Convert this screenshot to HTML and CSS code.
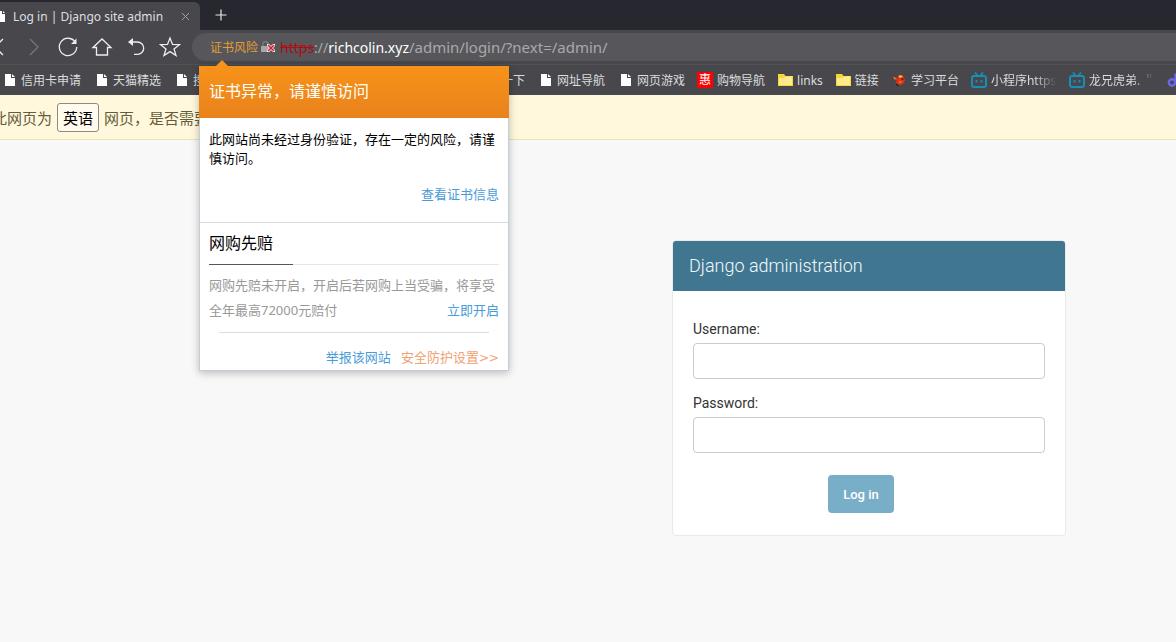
FILE: index.html
```html
<!DOCTYPE html>
<html lang="zh-CN">
<head>
<meta charset="utf-8">
<title>Log in | Django site admin</title>
<link rel="stylesheet" href="styles.css">
</head>
<body>
<svg class="defs" aria-hidden="true">
  <symbol id="file" viewBox="0 0 16 16"><path d="M4 2h6v4h4v8H4z" fill="#fff"/><path d="M11 2l3 3h-3z" fill="#fff"/></symbol>
  <symbol id="folder" viewBox="0 0 16 16"><path d="M1 2h6l1.500 2H16v10H1z" fill="#f7d63c"/><path d="M2 6h5l2-1.500h6V13H2z" fill="#ffeb8c"/></symbol>
  <symbol id="tv" viewBox="0 0 16 16"><path d="M4 0.500l2.500 3M12 0.500l-2.500 3" stroke="#168fb8" stroke-width="1.800" fill="none"/><rect x="1" y="4" width="14" height="11" rx="2" fill="none" stroke="#168fb8" stroke-width="2"/><path d="M5.500 8v2.500M10.500 8v2.500" stroke="#168fb8" stroke-width="1.800"/></symbol>
</svg>

<header class="browser">
  <div class="tabs">
    <div class="tab">
      <svg class="tab-icon" viewBox="0 0 8 16"><path d="M0 3h2v3h3v8H0zM3 3l2 2H3z" fill="#fff"/></svg>
      <span class="tab-title">Log in | Django site admin</span>
      <button class="tab-close" aria-label="关闭标签页"><svg width="9" height="9" viewBox="0 0 9 9"><path d="M1 1l7 7M8 1L1 8" stroke="#a0a0a4"/></svg></button>
    </div>
    <button class="tab-new" aria-label="新标签页"><svg width="12" height="12" viewBox="0 0 12 12"><path d="M6 0.500v11M0.500 6h11" stroke="#e8e8ea" stroke-width="1.200"/></svg></button>
  </div>

  <div class="toolbar">
    <nav class="tools">
      <button class="tool" aria-label="后退"><svg viewBox="0 0 22 22"><path d="M14 3L6 11l8 8"/></svg></button>
      <button class="tool tool-off" aria-label="前进"><svg viewBox="0 0 22 22"><path d="M7 3l8 8-8 8"/></svg></button>
      <button class="tool" aria-label="刷新"><svg viewBox="0 0 22 22"><path d="M18.500 6.500A8.700 8.700 0 1 0 19.700 11"/><path d="M19.500 2.500v5.500H14z" fill="#ededee" stroke="none"/></svg></button>
      <button class="tool" aria-label="主页"><svg viewBox="0 0 22 22"><path d="M2 11.500L11 3l9 8.500h-3.500V19h-11v-7.500z"/></svg></button>
      <button class="tool" aria-label="撤销"><svg viewBox="0 0 22 22"><path d="M4 6h8.500a6.200 6.200 0 0 1 0 12.400H9"/><path d="M8 2v8L3 6z" fill="#ededee" stroke="none"/></svg></button>
      <button class="tool" aria-label="收藏"><svg viewBox="0 0 22 22"><path d="M11 2l2.500 6.400 7 .3-5.500 4.200 2 6.600-6-3.900-6 3.900 2-6.600L1.500 8.700l7-.3z"/></svg></button>
    </nav>
    <div class="address">
      <span class="risk">证书风险</span>
      <svg class="lock" viewBox="0 0 16 14"><path d="M3 6V4a2.500 2.500 0 0 1 5 0v2" fill="none" stroke="#77777b" stroke-width="1.500"/><rect x="1" y="6" width="9" height="6" fill="#a7a7ab"/><path d="M7 4h2l2 2 2-2h2v2l-2 2 2 2v2h-2l-2-2-2 2H7v-2l2-2-2-2z" fill="#fff"/><path d="M8 5l6 6M14 5l-6 6" stroke="#d51f28" stroke-width="1.700"/></svg>
      <span class="url"><s class="scheme">https</s>://<b class="host">richcolin.xyz</b><span class="path">/admin/login/?next=/admin/</span></span>

      <section class="popup">
        <h2 class="popup-title">证书异常，请谨慎访问</h2>
        <div class="notice">
          <p class="notice-text">此网站尚未经过身份验证，存在一定的风险，请谨慎访问。</p>
          <a class="link notice-link" href="#">查看证书信息</a>
        </div>
        <div class="cover">
          <h3 class="cover-title"><span>网购先赔</span></h3>
          <div class="cover-text">
            <p>网购先赔未开启，开启后若网购上当受骗，将享受</p>
            <div class="cover-row"><span>全年最高72000元赔付</span><a class="link" href="#">立即开启</a></div>
          </div>
          <div class="popup-foot"><a class="link" href="#">举报该网站</a><a class="link link-warm" href="#">安全防护设置<span class="arrows">&gt;&gt;</span></a></div>
        </div>
      </section>
    </div>
  </div>

  <nav class="bookmarks">
    <a class="mark" href="#"><svg><use href="#file"/></svg><span>信用卡申请</span></a>
    <a class="mark" href="#"><svg><use href="#file"/></svg><span>天猫精选</span></a>
    <a class="mark mark-wide" href="#"><svg><use href="#file"/></svg><span>搜</span></a>
    <a class="mark" href="#"><span>一下</span></a>
    <a class="mark" href="#"><svg><use href="#file"/></svg><span>网址导航</span></a>
    <a class="mark" href="#"><svg><use href="#file"/></svg><span>网页游戏</span></a>
    <a class="mark" href="#"><i class="hui">惠</i><span>购物导航</span></a>
    <a class="mark" href="#"><svg><use href="#folder"/></svg><span>links</span></a>
    <a class="mark" href="#"><svg><use href="#folder"/></svg><span>链接</span></a>
    <a class="mark" href="#"><svg viewBox="0 0 16 16"><path d="M2 5l5 1 1-3 4 1 2 4-2 4-4 1-4-3 2-1z" fill="#e03216"/><path d="M7 4l3-1 2 2-3 1z" fill="#ffb42c"/><path d="M2 5l3 1-1 2zM7 10l4-1-1 2z" fill="#f7872a"/><path d="M5 11l3 3h-2zM10 6l3 1-2 1z" fill="#26160f"/></svg><span>学习平台</span></a>
    <a class="mark mark-fade" href="#"><svg><use href="#tv"/></svg><span>小程序https</span></a>
    <a class="mark mark-fade" href="#"><svg><use href="#tv"/></svg><span>龙兄虎弟. ＂</span></a>
    <a class="mark" href="#" aria-label="音乐"><svg viewBox="0 0 16 16"><circle cx="5" cy="10.500" r="3.200" fill="none" stroke="#6a67ee" stroke-width="2.400"/><path d="M8.500 1.500v9" stroke="#6a67ee" stroke-width="2.400"/></svg></a>
  </nav>
</header>

<div class="translate"><span>此网页为</span><button class="lang">英语</button><span>网页，是否需要</span></div>

<main class="page">
  <form class="login">
    <h1 class="login-title">Django administration</h1>
    <div class="login-body">
      <label class="label" for="username">Username:</label>
      <input class="field" id="username" type="text">
      <label class="label" for="password">Password:</label>
      <input class="field" id="password" type="password">
      <div class="submit-row"><button class="submit" type="button">Log in</button></div>
    </div>
  </form>
</main>
</body>
</html>
```
FILE: styles.css
```css
* { box-sizing: border-box; }
body {
  margin: 0;
  min-height: 100vh;
  background: #f8f8f8;
  font-family: "Noto Sans", "Noto Sans CJK SC", sans-serif;
  overflow: hidden;
}
h1, h2, h3, p { margin: 0; font-weight: 400; }
button { padding: 0; border: 0; background: none; font: inherit; }
a { text-decoration: none; }
.defs { display: none; }

.browser { background: #48484c; }
.tabs { display: flex; height: 30px; background: #27272f; }
.tab {
  display: flex;
  align-items: center;
  width: 200px;
  margin-top: 2px;
  padding-right: 10px;
  border-radius: 0 6px 0 0;
  background: #48484c;
}
.tab-icon { width: 8px; height: 16px; margin-right: 5px; }
.tab-title { flex: 1; color: #dedee0; font-size: 12px; white-space: nowrap; }
.tab-close { display: flex; }
.tab-close svg, .tab-new svg { display: block; }
.tab-new { width: 40px; padding-left: 15px; }

.toolbar { display: flex; align-items: center; gap: 5px; height: 34px; }
.tools { display: flex; margin-left: -17px; }
.tool { display: flex; justify-content: center; width: 34px; }
.tool svg { width: 22px; height: 22px; fill: none; stroke: #ededee; stroke-width: 1.3; }
.tool-off svg { stroke: #77777b; }
.address {
  position: relative;
  display: flex;
  flex: 1;
  align-items: center;
  height: 28px;
  padding-left: 18px;
  border-radius: 14px 0 0 14px;
  background: #57575b;
}
.risk { color: #e39d35; font-size: 12px; }
.lock { width: 16px; height: 14px; margin: 0 4px 0 2px; }
.url { color: #a9a9ad; font-size: 14px; white-space: nowrap; }
.scheme { color: #b30b12; }
.host { color: #fff; font-weight: 400; }
.path { font-size: 15px; }

.popup {
  position: absolute;
  top: 33px;
  left: 7px;
  z-index: 2;
  width: 310px;
  border: 1px solid #c3cedb;
  border-top: 0;
  background: #fff;
  box-shadow: 0 2px 8px rgba(0, 0, 0, 0.25);
  font-size: 13px;
}
.popup::before {
  position: absolute;
  top: -6px;
  left: 16px;
  border: 6px solid transparent;
  border-top: 0;
  border-bottom-color: #f79319;
  content: "";
}
.popup-title {
  margin: 0 -1px;
  padding: 0 10px 2px;
  background: linear-gradient(#f79319, #e9821c);
  color: #fff;
  font-size: 16px;
  line-height: 50px;
}
.notice { padding: 12px 9px 18px; border-bottom: 1px solid #d6d9dd; }
.notice-text { color: #000; line-height: 19px; }
.notice-link { display: block; margin-top: 16px; line-height: 20px; text-align: right; }
.link { color: #4a9bd9; }
.cover { padding: 0 9px; }
.cover-title { border-bottom: 1px solid #e6e6e6; font-size: 16px; line-height: 41px; }
.cover-title span { display: block; width: 84px; margin-bottom: -1px; border-bottom: 1px solid #55555f; }
.cover-text { padding: 8px 0 9px; color: #999; line-height: 25px; }
.cover-row { display: flex; justify-content: space-between; }
.popup-foot {
  display: flex;
  justify-content: flex-end;
  gap: 10px;
  margin: 0 10px;
  padding-top: 12px;
  border-top: 1px solid #dcdcdc;
  line-height: 24px;
  white-space: nowrap;
}
.popup-foot .link-warm { margin-right: -10px; color: #f2a271; }
.arrows { font-family: "DejaVu Sans", sans-serif; font-size: 12px; }

.bookmarks {
  display: flex;
  align-items: center;
  gap: 12px;
  height: 31px;
  padding-left: 1px;
  overflow: hidden;
  border-top: 1px solid #525256;
}
.mark {
  display: flex;
  flex: none;
  align-items: center;
  gap: 4px;
  color: #dcdcde;
  font-size: 12px;
  white-space: nowrap;
}
.mark svg { width: 16px; height: 16px; }
.mark-wide { width: 316px; }
.mark-fade span {
  width: 66px;
  overflow: hidden;
  -webkit-mask-image: linear-gradient(90deg, #000 65%, transparent);
  mask-image: linear-gradient(90deg, #000 65%, transparent);
}
.hui { width: 16px; background: #f00; color: #fff; font-style: normal; line-height: 16px; text-align: center; }

.translate {
  display: flex;
  align-items: center;
  gap: 5px;
  height: 45px;
  margin-left: -8px;
  border-bottom: 1px solid #ebe3b0;
  background: #fff8dc;
  color: #665c3c;
  font-size: 15px;
}
.lang {
  width: 42px;
  height: 29px;
  border: 1px solid #8f8a7c;
  border-radius: 3px;
  background: #fffbee;
  color: #000;
}

.page { display: flex; justify-content: flex-end; padding: 100px 110px 0 20px; }
.login {
  width: 100%;
  max-width: 394px;
  overflow: hidden;
  border: 1px solid #eaeaea;
  border-radius: 4px;
  background: #fff;
  font-family: Roboto, sans-serif;
}
.login-title { padding: 0 16px; background: #417690; color: #f2fbff; font-size: 18px; font-weight: 300; line-height: 50px; }
.login-body { padding: 28px 20px 22px; }
.label { display: block; color: #333; font-size: 14px; line-height: 20px; }
.field {
  display: block;
  width: 100%;
  height: 36px;
  margin: 4px 0 14px;
  padding: 8px;
  border: 1px solid #ccc;
  border-radius: 4px;
  background: #fff;
}
.submit-row { padding: 8px 0 0 135px; }
.submit { width: 66px; height: 38px; border-radius: 4px; background: #79aec8; color: #fff; font-size: 13px; font-weight: 500; }
```
